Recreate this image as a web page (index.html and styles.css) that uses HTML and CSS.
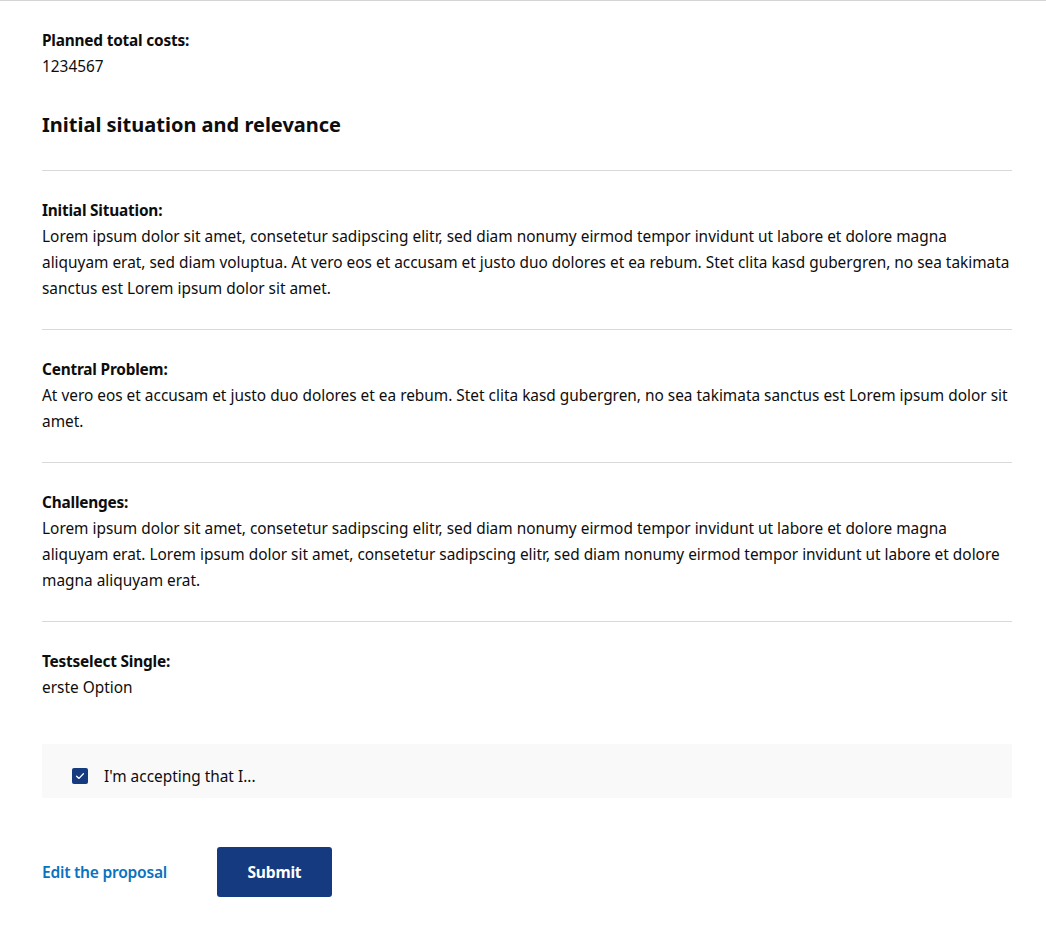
FILE: index.html
```html
<!DOCTYPE html>
<html lang="en">
<head>
<meta charset="utf-8">
<title>Proposal summary</title>
<link rel="stylesheet" href="styles.css">
</head>
<body>
<main class="page">
  <div class="field field-intro">
    <div class="label">Planned total costs:</div>
    <div class="value">1234567</div>
  </div>

  <h2 class="section-title">Initial situation and relevance</h2>

  <div class="field field-ruled">
    <div class="label">Initial Situation:</div>
    <div class="value">Lorem ipsum dolor sit amet, consetetur sadipscing elitr, sed diam nonumy eirmod tempor invidunt ut labore et dolore magna aliquyam erat, sed diam voluptua. At vero eos et accusam et justo duo dolores et ea rebum. Stet clita kasd gubergren, no sea takimata sanctus est Lorem ipsum dolor sit amet.</div>
  </div>

  <div class="field field-ruled">
    <div class="label">Central Problem:</div>
    <div class="value">At vero eos et accusam et justo duo dolores et ea rebum. Stet clita kasd gubergren, no sea takimata sanctus est Lorem ipsum dolor sit amet.</div>
  </div>

  <div class="field field-ruled">
    <div class="label">Challenges:</div>
    <div class="value">Lorem ipsum dolor sit amet, consetetur sadipscing elitr, sed diam nonumy eirmod tempor invidunt ut labore et dolore magna aliquyam erat. Lorem ipsum dolor sit amet, consetetur sadipscing elitr, sed diam nonumy eirmod tempor invidunt ut labore et dolore magna aliquyam erat.</div>
  </div>

  <div class="field field-last">
    <div class="label">Testselect Single:</div>
    <div class="value">erste Option</div>
  </div>

  <label class="consent">
    <span class="checkbox">
      <svg viewBox="0 0 16 16" width="16" height="16" aria-hidden="true">
        <path d="M4.6 8.2 L7 10.4 L11.4 5.8" fill="none" stroke="#ffffff" stroke-width="1.3" stroke-linecap="round" stroke-linejoin="round"/>
      </svg>
    </span>
    <span class="consent-text">I'm accepting that I...</span>
  </label>

  <div class="actions">
    <a class="edit-link" href="#">Edit the proposal</a>
    <button class="submit" type="button">Submit</button>
  </div>
</main>
</body>
</html>
```
FILE: styles.css
```css
html, body {
  margin: 0;
  padding: 0;
  background: #ffffff;
}

body {
  border-top: 1px solid #d4d4d4;
  font-family: "Noto Sans", "Open Sans", sans-serif;
  font-size: 15.4px;
  line-height: 26px;
  color: #0d0d0d;
}

.page {
  padding: 27px 34px 60px 42px;
}

.label {
  font-weight: 700;
  letter-spacing: -0.2px;
}

.field-intro {
  padding-bottom: 30px;
}

.section-title {
  margin: 0;
  padding-bottom: 30px;
  font-size: 20px;
  line-height: 30px;
  font-weight: 700;
  border-bottom: 1px solid #d9d9d9;
}

.field-ruled {
  padding: 27px 0;
  border-bottom: 1px solid #d9d9d9;
}

.field-last {
  padding-top: 27px;
}

.consent {
  box-sizing: border-box;
  margin-top: 43px;
  height: 54px;
  padding: 11px 0 0 30px;
  background: #f9f9f9;
  display: flex;
  align-items: center;
  gap: 16px;
  cursor: pointer;
}

.checkbox {
  width: 16px;
  height: 16px;
  border-radius: 2px;
  background: #163a80;
  display: flex;
  flex: none;
  margin-top: -2px;
}

.actions {
  margin-top: 49px;
  display: flex;
  align-items: center;
  gap: 50px;
}

.edit-link {
  color: #0b72c0;
  font-weight: 600;
  text-decoration: none;
  font-size: 15.6px;
  letter-spacing: -0.25px;
}

.submit {
  width: 115px;
  height: 50px;
  border: none;
  border-radius: 3px;
  background: #163a80;
  color: #ffffff;
  font-family: "Noto Sans", "Open Sans", sans-serif;
  font-size: 15.6px;
  font-weight: 700;
  letter-spacing: -0.2px;
  cursor: pointer;
}
```
